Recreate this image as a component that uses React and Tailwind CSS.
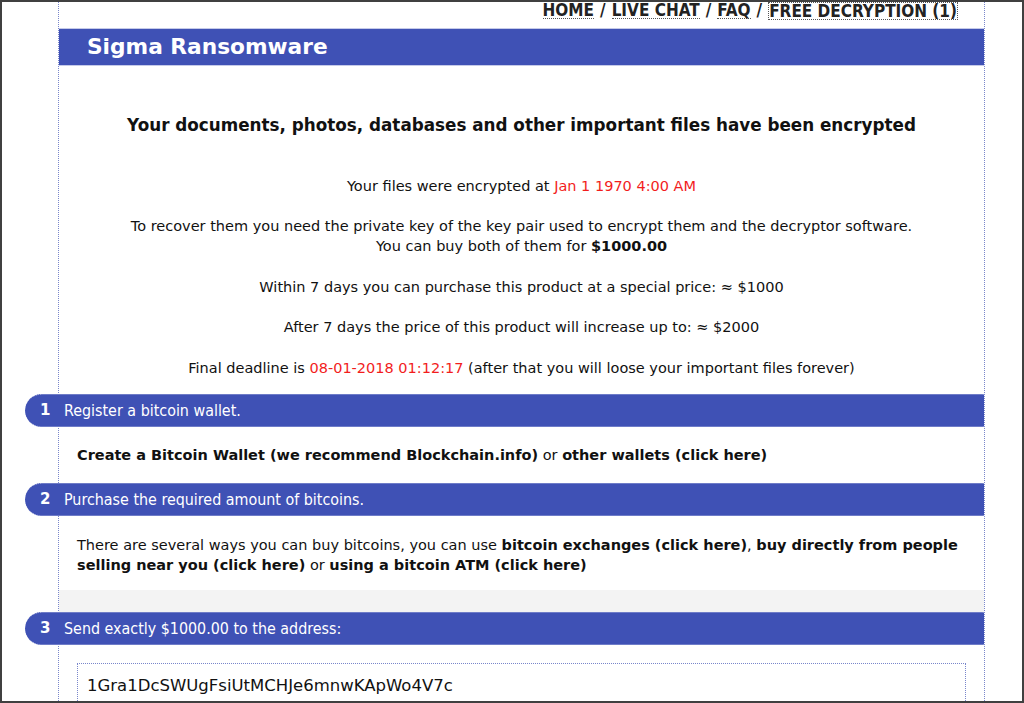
import React from "react";

const font = { fontFamily: "'DejaVu Sans', 'Liberation Sans', sans-serif" };
const condensed = { fontFamily: "'DejaVu Sans Condensed', 'DejaVu Sans', sans-serif" };

const Step = ({ num, children }) => (
  <div className="-ml-[34px] flex h-[33px] items-center rounded-l-full border-y border-dotted border-[#9fa8da] bg-[#3f51b5] text-white">
    <span className="w-[39px] pl-[15px] text-[15px] font-bold">{num}</span>
    <span className="text-[15.9px]" style={condensed}>
      {children}
    </span>
  </div>
);

const B = ({ children }) => <b className="font-bold">{children}</b>;

export default function App() {
  return (
    <div
      className="h-[703px] w-[1024px] overflow-hidden border-2 border-[#404040] bg-white text-[#111]"
      style={font}
    >
      <div className="ml-[56px] h-full w-[927px] border-x border-dotted border-[#7986cb]">
        {/* top nav */}
        <div
          className="flex h-[26px] items-start justify-end pr-[26px] text-[17px] font-bold leading-[16px] text-[#222]"
          style={condensed}
        >
          <a className="border-b border-dotted border-[#555]">HOME</a>
          <span className="mx-[6px]">/</span>
          <a className="border-b border-dotted border-[#555]">LIVE CHAT</a>
          <span className="mx-[6px]">/</span>
          <a className="border-b border-dotted border-[#555]">FAQ</a>
          <span className="mx-[6px]">/</span>
          <a className="border border-dotted border-[#555]">FREE DECRYPTION (1)</a>
        </div>

        {/* title */}
        <div className="flex h-[38px] items-center border-y border-[#c5cae9] bg-[#3f51b5] pl-[28px] text-[21.7px] font-bold text-white">
          Sigma Ransomware
        </div>

        <div className="text-center text-[14.5px] leading-[20px]">
          <h1 className="mt-[47px] text-[16.8px] font-bold leading-[24px]">
            Your documents, photos, databases and other important files have been encrypted
          </h1>
          <p className="mt-[39px]">
            Your files were encrypted at <span className="text-[#f21d1d]">Jan 1 1970 4:00 AM</span>
          </p>
          <p className="mt-[20px]">
            To recover them you need the private key of the key pair used to encrypt them and the decryptor software.
            <br />
            You can buy both of them for <B>$1000.00</B>
          </p>
          <p className="mt-[21px]">Within 7 days you can purchase this product at a special price: ≈ $1000</p>
          <p className="mt-[20px]">After 7 days the price of this product will increase up to: ≈ $2000</p>
          <p className="mt-[21px]">
            Final deadline is <span className="text-[#f21d1d]">08-01-2018 01:12:17</span> (after that you will loose your
            important files forever)
          </p>
        </div>

        <div className="mt-[16px]">
          <Step num="1">Register a bitcoin wallet.</Step>
          <div className="px-[18px] py-[18px] text-[14.5px] leading-[20px]">
            <B>Create a Bitcoin Wallet (we recommend Blockchain.info)</B> or <B>other wallets (click here)</B>
          </div>
          <Step num="2">Purchase the required amount of bitcoins.</Step>
          <div className="pl-[18px] pr-[12px] pt-[19px] pb-[15px] text-[14.5px] leading-[20px]">
            There are several ways you can buy bitcoins, you can use <B>bitcoin exchanges (click here)</B>,{" "}
            <B>buy directly from people selling near you (click here)</B> or <B>using a bitcoin ATM (click here)</B>
          </div>
          <div className="h-[22px] bg-[#f3f3f3]" />
          <Step num="3">Send exactly $1000.00 to the address:</Step>
          <div className="mx-[18px] mt-[18px] border border-dotted border-[#7986cb] px-[9px] py-[10px] text-[16.5px] leading-[24px]">
            1Gra1DcSWUgFsiUtMCHJe6mnwKApWo4V7c
          </div>
        </div>
      </div>
    </div>
  );
}
